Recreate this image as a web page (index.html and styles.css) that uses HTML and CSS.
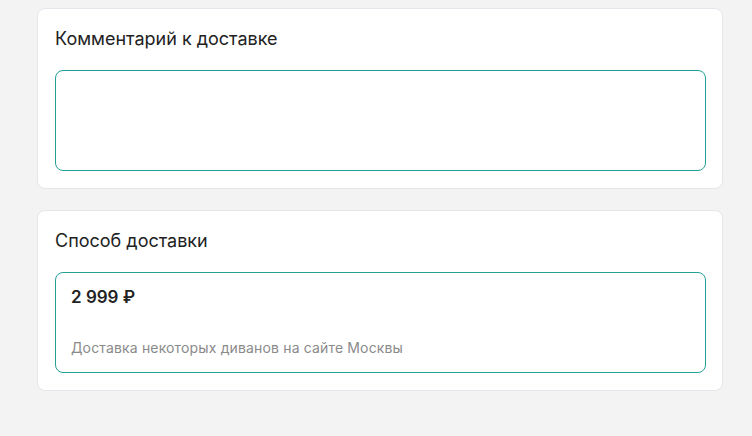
FILE: index.html
```html
<!DOCTYPE html>
<html lang="ru">
<head>
  <meta charset="UTF-8">
  <meta name="viewport" content="width=device-width, initial-scale=1.0">
  <title>Оформление доставки</title>
  <link rel="stylesheet" href="styles.css">
</head>
<body>
  <div class="page">
    <!-- Comment -->
    <section class="card">
      <h2 class="card-title">Комментарий к доставке</h2>
      <textarea class="comment" aria-label="Комментарий к доставке"></textarea>
    </section>

    <!-- Delivery method -->
    <section class="card">
      <h2 class="card-title">Способ доставки</h2>
      <div class="delivery-option">
        <div class="delivery-price">2 999 ₽</div>
        <div class="delivery-note">Доставка некоторых диванов на сайте Москвы</div>
      </div>
    </section>
  </div>
</body>
</html>
```

FILE: styles.css
```css
/* General Styles */
body {
  margin: 0;
  background-color: #f3f3f3;
  font-family: Inter, 'Noto Sans', sans-serif;
  color: #222;
}

.page {
  width: 686px;
  margin-left: 37px;
  padding-top: 8px;
  display: flex;
  flex-direction: column;
  gap: 21px;
}

/* Cards */
.card {
  background-color: #ffffff;
  border: 1px solid #e3e6ea;
  border-radius: 8px;
  padding: 17px 16px 17px 17px;
}

.card-title {
  margin: 0 0 18px;
  font-size: 18px;
  line-height: 26px;
  font-weight: 400;
  color: #222;
}

/* Comment field */
.comment {
  display: block;
  box-sizing: border-box;
  width: 100%;
  height: 101px;
  margin: 0;
  padding: 12px 15px;
  border: 1px solid #23a096;
  border-radius: 8px;
  resize: none;
  outline: none;
  font-family: inherit;
  font-size: 14px;
}

/* Delivery option */
.delivery-option {
  box-sizing: border-box;
  height: 101px;
  border: 1px solid #23a096;
  border-radius: 8px;
  padding: 14px 15px 15px;
  display: flex;
  flex-direction: column;
  justify-content: space-between;
}

.delivery-price {
  font-size: 17px;
  line-height: 20px;
  font-weight: 600;
  color: #222;
}

.delivery-note {
  font-size: 14px;
  line-height: 18px;
  letter-spacing: 0.15px;
  color: #8a8a8a;
}
```
